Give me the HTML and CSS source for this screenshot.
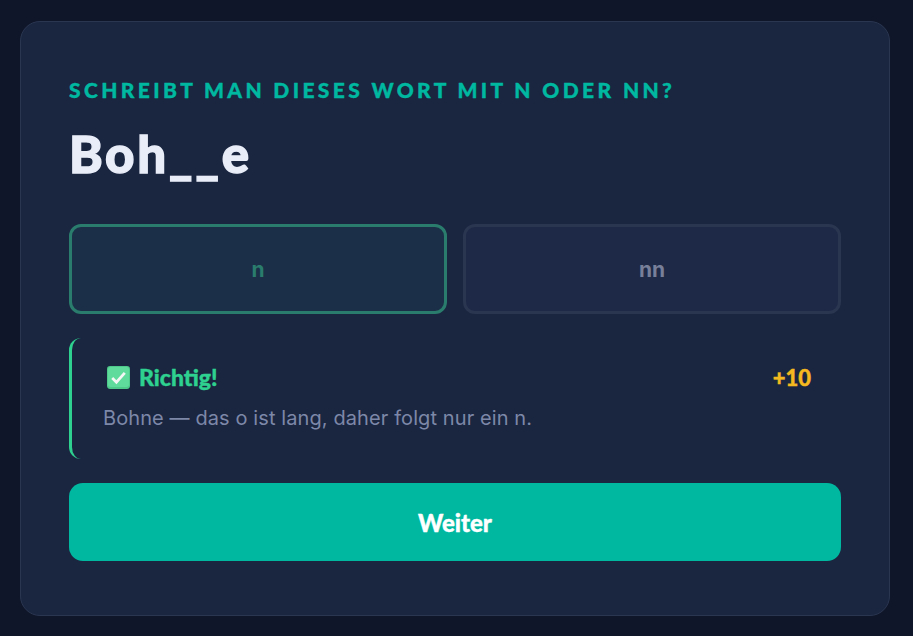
FILE: index.html
```html
<!DOCTYPE html>
<html lang="de">
<head>
    <meta charset="UTF-8">
    <meta name="viewport" content="width=device-width, initial-scale=1.0">
    <title>Wortquiz</title>
    <link rel="stylesheet" href="styles.css">
</head>
<body>
    <div class="card">
        <p class="question-label">Schreibt man dieses Wort mit n oder nn?</p>
        <h1 class="word">Boh__e</h1>

        <div class="options">
            <button class="option option-correct" type="button">n</button>
            <button class="option" type="button">nn</button>
        </div>

        <div class="feedback">
            <div class="feedback-head">
                <span class="feedback-title">
                    <svg class="check-icon" viewBox="0 0 22 22" aria-hidden="true">
                        <rect x="0" y="0" width="22" height="22" rx="3" fill="#4fc98a"/>
                        <rect x="1" y="1" width="20" height="19" rx="2.5" fill="#5fdc9b"/>
                        <path d="M5 11.5l4 4 8-9" fill="none" stroke="#f4f6f5" stroke-width="2.6"/>
                    </svg>
                    Richtig!
                </span>
                <span class="points">+10</span>
            </div>
            <p class="feedback-text">Bohne — das o ist lang, daher folgt nur ein n.</p>
        </div>

        <button class="next-btn" type="button">Weiter</button>
    </div>
</body>
</html>
```

FILE: styles.css
```css
* {
    box-sizing: border-box;
}

body {
    margin: 0;
    min-height: 100vh;
    padding: 21px 23px 21px 20px;
    background-color: #0f1629;
    font-family: Inter, sans-serif;
}

.card {
    height: 595px;
    padding: 48px;
    background-color: #1a2540;
    border: 1px solid #2a3550;
    border-radius: 20px;
}

.question-label {
    margin: 8px 0 0;
    font-family: Lato, sans-serif;
    font-size: 21px;
    line-height: 24px;
    font-weight: 900;
    letter-spacing: 3.37px;
    text-transform: uppercase;
    color: #00b8a0;
    -webkit-text-stroke: 0.4px #00b8a0;
}

.word {
    margin: 20px 0 0;
    font-family: Lato, sans-serif;
    font-size: 51px;
    line-height: 64px;
    font-weight: 900;
    letter-spacing: 2.6px;
    color: #e8edf8;
    -webkit-text-stroke: 1.4px #e8edf8;
}

.options {
    display: flex;
    gap: 16px;
    margin-top: 38px;
}

.option {
    flex: 1;
    height: 90px;
    background-color: #1e2947;
    border: 3px solid #2a3550;
    border-radius: 12px;
    font-family: Inter, sans-serif;
    font-size: 21px;
    font-weight: 700;
    color: #777f99;
}

.option-correct {
    background-color: #1b3048;
    border-color: #2a7d6c;
    color: #2a7d6c;
}

.feedback {
    height: 121px;
    margin-top: 24px;
    padding: 24px 30px 0 31px;
    border-left: 3px solid #2ed18f;
    border-radius: 12px;
}

.feedback-head {
    display: flex;
    justify-content: space-between;
    align-items: center;
    height: 30px;
}

.feedback-title {
    display: flex;
    align-items: center;
    gap: 9px;
    margin-left: 4px;
    font-family: Lato, sans-serif;
    font-size: 23px;
    font-weight: 900;
    color: #2ed18f;
    -webkit-text-stroke: 0.4px #2ed18f;
}

.check-icon {
    width: 23px;
    height: 23px;
}

.points {
    font-family: Lato, sans-serif;
    font-size: 22px;
    font-weight: 900;
    color: #f5b920;
    -webkit-text-stroke: 0.4px #f5b920;
}

.feedback-text {
    margin: 14px 0 0;
    font-size: 20px;
    line-height: 24px;
    letter-spacing: 0.1px;
    color: #7d88a8;
}

.next-btn {
    display: block;
    width: 100%;
    height: 78px;
    margin-top: 24px;
    background-color: #00b8a0;
    border: none;
    border-radius: 14px;
    font-family: Lato, sans-serif;
    font-size: 24px;
    font-weight: 900;
    color: #ffffff;
    -webkit-text-stroke: 0.4px #ffffff;
}
```
